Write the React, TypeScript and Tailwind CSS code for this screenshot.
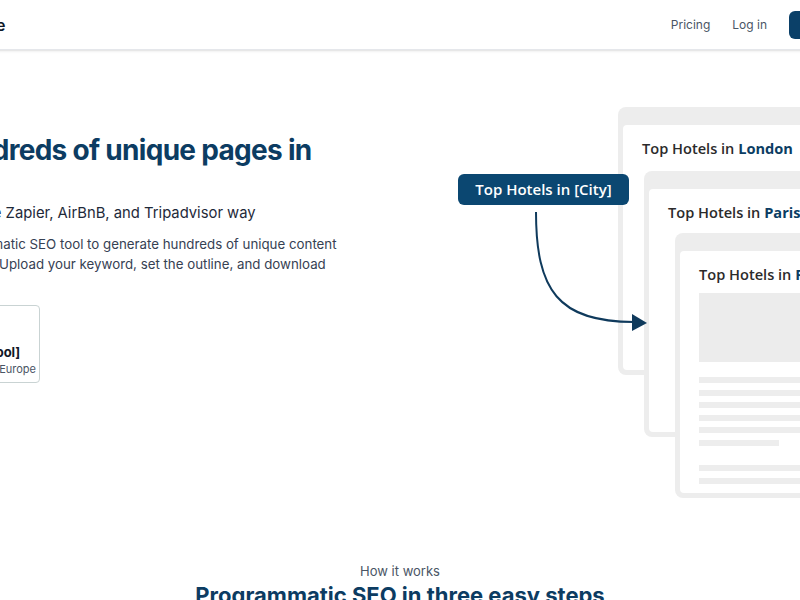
import React from "react";

function PageCard({
  className,
  city,
  children,
}: {
  className: string;
  city: string;
  children?: React.ReactNode;
}) {
  return (
    <div className={`absolute w-[300px] rounded-lg bg-[#ededed] pt-[18px] pb-[5px] px-[5px] ${className}`}>
      <div className="h-full rounded-[4px] bg-white pl-[19px] pt-[13px]">
        <p className="font-['Open_Sans'] text-[14.6px] font-semibold leading-5 text-[#2b2b2b]">
          Top Hotels in <span className="font-bold text-[#0b3d63]">{city}</span>
        </p>
        {children}
      </div>
    </div>
  );
}

function Illustration() {
  return (
    <div className="relative h-[410px] w-[442px] shrink-0">
      <PageCard className="left-[160px] top-[7px] h-[268px]" city="London" />
      <PageCard className="left-[186px] top-[71px] h-[266px]" city="Paris" />
      <PageCard className="left-[217px] top-[133px] h-[265px]" city="Rome">
        <div className="mt-[9px] h-[69px] bg-[#ececec]" />
        <div className="mt-[15px] flex flex-col gap-[6.5px]">
          <div className="h-[6px] bg-[#ededed]" />
          <div className="h-[6px] bg-[#ededed]" />
          <div className="h-[6px] bg-[#ededed]" />
          <div className="h-[6px] bg-[#ededed]" />
          <div className="h-[6px] bg-[#ededed]" />
          <div className="h-[6px] w-[80px] bg-[#ededed]" />
        </div>
        <div className="mt-[19px] flex flex-col gap-[7px]">
          <div className="h-[6px] bg-[#ededed]" />
          <div className="h-[6px] bg-[#ededed]" />
        </div>
      </PageCard>

      <svg className="absolute left-0 top-0" width="200" height="240" viewBox="0 0 200 240" fill="none">
        <path d="M78 112 C78 190, 100 222, 176 222" stroke="#0f3a5c" strokeWidth="2" />
        <path d="M174 214 L189 223 L174 231 Z" fill="#0f3a5c" />
      </svg>

      <div className="absolute left-0 top-[74px] flex h-[31px] w-[171px] items-center justify-center rounded-md bg-[#0b4771] font-['Open_Sans'] text-[15px] font-semibold text-white">
        Top Hotels in [City]
      </div>
    </div>
  );
}

export default function App() {
  return (
    <div className="min-h-[600px] overflow-hidden bg-white font-['Inter',sans-serif] text-gray-800">
      <div className="flex justify-center">
        <div className="w-[1000px] shrink-0">
          <header className="flex h-[50px] items-center justify-between border-b border-gray-200 pl-[5px] pr-3 shadow-sm">
            <div className="flex items-center gap-2">
              <div className="h-5 w-5 rounded bg-[#0b3d63]" />
              <span className="text-[16px] font-semibold text-gray-900">Bulkpage</span>
            </div>
            <nav className="flex items-center gap-[22px] text-[12px] text-gray-600">
              <a>Pricing</a>
              <a>Log in</a>
              <button className="h-7 w-[99px] rounded-md bg-[#0b4068] text-[13px] font-medium text-white">
                Get started
              </button>
            </nav>
          </header>

          <section className="flex">
            <div className="w-[520px] shrink-0 pl-[38px] pt-[82px]">
              <h1 className="text-[28px] font-bold leading-9 tracking-tight text-[#0c3c62]">
                Hundreds of unique pages in
              </h1>
              <p className="mt-[33px] text-[14.8px] leading-6 text-gray-800">
                Grow the Zapier, AirBnB, and Tripadvisor way
              </p>
              <p className="mt-[9px] w-[412px] text-[13.3px] leading-5 text-gray-700">
                Programmatic SEO tool to generate hundreds of unique content in pages. Upload your keyword, set the outline, and download
              </p>
              <div className="mt-[31px] h-[78px] w-[102px] rounded border border-[#c9d3d3] px-3 pt-[37px]">
                <p className="whitespace-nowrap text-[13px] font-bold leading-[18px] text-gray-900">[Liverpool]</p>
                <p className="whitespace-nowrap text-[11px] leading-4 text-gray-600">England, Europe</p>
              </div>
            </div>
            <div className="ml-[38px] mt-[50px]">
              <Illustration />
            </div>
          </section>

          <section className="flex flex-col items-center pt-[51px]">
            <p className="text-[13px] leading-5 text-gray-600">How it works</p>
            <h2 className="-mt-[2px] text-[22px] font-bold leading-8 text-[#0c3c62]">
              Programmatic SEO in three easy steps
            </h2>
          </section>
        </div>
      </div>
    </div>
  );
}
